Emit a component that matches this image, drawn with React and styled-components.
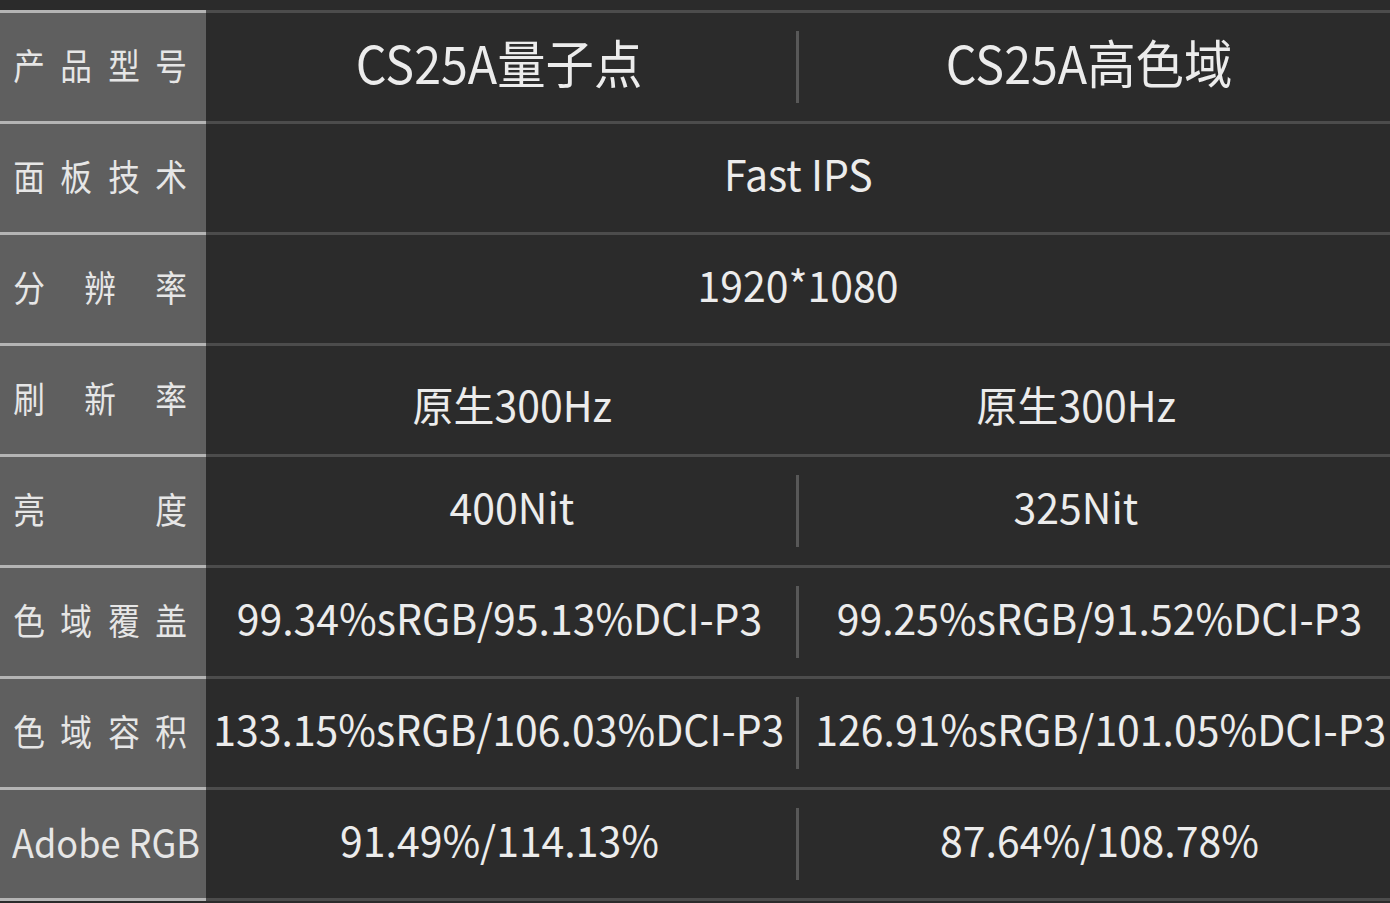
import styled, { createGlobalStyle } from 'styled-components';

const GlobalStyle = createGlobalStyle`
  html, body {
    margin: 0;
    padding: 0;
    background-color: #2b2b2b;
  }
  body {
    font-family: "Noto Sans CJK SC", "Noto Sans", sans-serif;
    color: #e8e8e8;
  }
`;

// pads: [left cell pl, left cell pr, right cell pl, right cell pr]
const rows = [
  { label: '产品型号', values: ['CS25A量子点', 'CS25A高色域'], title: true, divider: true, pads: [0, 4, 0, 11] },
  { label: '面板技术', values: ['Fast IPS'] },
  { label: '分辨率', values: ['1920*1080'] },
  { label: '刷新率', values: ['原生300Hz', '原生300Hz'], low: true, pads: [22, 0, 0, 37] },
  { label: '亮度', values: ['400Nit', '325Nit'], divider: true, pads: [22, 0, 0, 37] },
  { label: '色域覆盖', values: ['99.34%sRGB/95.13%DCI-P3', '99.25%sRGB/91.52%DCI-P3'], divider: true, pads: [0, 4, 9, 0] },
  { label: '色域容积', values: ['133.15%sRGB/106.03%DCI-P3', '126.91%sRGB/101.05%DCI-P3'], divider: true, pads: [0, 4, 9, 0] },
  { label: 'Adobe RGB', values: ['91.49%/114.13%', '87.64%/108.78%'], latin: true, divider: true, pads: [0, 4, 9, 0] },
];

function App() {
  return (
    <>
      <GlobalStyle />
      <SpecTable>
        {rows.map((row, i) => (
          <SpecRow key={i}>
            <LabelCell>
              {row.latin ? (
                <LatinLabel>{row.label}</LatinLabel>
              ) : (
                row.label.split('').map((ch, j) => <LabelChar key={j}>{ch}</LabelChar>)
              )}
            </LabelCell>
            {row.values.length === 1 ? (
              <MergedArea>
                <ValueCell>
                  <ValueText>{row.values[0]}</ValueText>
                </ValueCell>
              </MergedArea>
            ) : (
              <SplitArea>
                <ValueCell $pl={row.pads[0]} $pr={row.pads[1]} $low={row.low}>
                  <ValueText $title={row.title}>{row.values[0]}</ValueText>
                </ValueCell>
                <Divider $hidden={!row.divider} />
                <ValueCell $pl={row.pads[2]} $pr={row.pads[3]} $low={row.low}>
                  <ValueText $title={row.title}>{row.values[1]}</ValueText>
                </ValueCell>
              </SplitArea>
            )}
          </SpecRow>
        ))}
      </SpecTable>
    </>
  );
}

export default App;

const SpecTable = styled.main`
  display: flex;
  flex-direction: column;
  width: 1390px;
  height: 903px;
  padding-top: 10px;
  box-sizing: border-box;
  overflow: hidden;
`;

const SpecRow = styled.section`
  display: grid;
  grid-template-columns: 206px 1fr;
  height: 111px;
  flex-shrink: 0;

  &:last-child {
    height: 114px;
  }
`;

const LabelCell = styled.div`
  display: flex;
  justify-content: space-between;
  align-items: center;
  padding: 0 17px 6px 11px;
  background-color: #5f5f5f;
  border-top: 3px solid #b4b4b4;

  ${SpecRow}:last-child & {
    border-bottom: 3px solid #b4b4b4;
  }
`;

const LabelChar = styled.span`
  font-size: 36px;
  line-height: 1;
  transform: scaleX(0.88);
  color: #e6e6e6;
`;

const LatinLabel = styled.span`
  font-size: 39px;
  line-height: 1;
  margin-left: 1px;
  transform: scaleX(0.925);
  transform-origin: left center;
  white-space: nowrap;
  color: #e6e6e6;
`;

const MergedArea = styled.div`
  display: flex;
  border-top: 3px solid #4c4c4c;
`;

const SplitArea = styled.div`
  display: grid;
  grid-template-columns: 590px 3px 1fr;
  align-items: center;
  border-top: 3px solid #4c4c4c;

  ${SpecRow}:last-child & {
    border-bottom: 3px solid #4c4c4c;
  }
`;

const ValueCell = styled.div`
  flex: 1;
  display: flex;
  justify-content: center;
  align-items: center;
  align-self: stretch;
  padding-left: ${(p) => p.$pl || 0}px;
  padding-right: ${(p) => p.$pr || 0}px;
  padding-top: ${(p) => (p.$low ? 8 : 0)}px;
  padding-bottom: ${(p) => (p.$low ? 0 : 10)}px;
`;

const ValueText = styled.span`
  display: inline-block;
  white-space: nowrap;
  line-height: 1;
  font-size: ${(p) => (p.$title ? '52px' : '42px')};
  transform: scaleX(${(p) => (p.$title ? 0.93 : 0.975)});
  color: #ececec;
`;

const Divider = styled.div`
  width: 3px;
  height: 72px;
  background-color: ${(p) => (p.$hidden ? 'transparent' : '#585858')};
`;
